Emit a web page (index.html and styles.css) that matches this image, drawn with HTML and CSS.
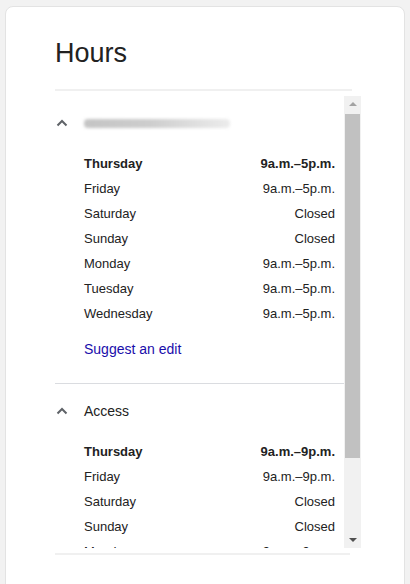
FILE: index.html
```html
<!DOCTYPE html>
<html lang="en">

<head>
    <meta charset="UTF-8">
    <meta name="viewport" content="width=device-width, initial-scale=1.0">
    <title>Hours</title>
    <link rel="stylesheet" href="styles.css">
</head>

<body>
    <div class="card">
        <h1 class="title">Hours</h1>
        <div class="edge edge-top"></div>
        <div class="panel">
            <div class="list">
                <div class="section">
                    <div class="section-head">
                        <span class="chevron">
                            <svg width="12" height="8" viewBox="0 0 12 8"><polyline points="1.5,6.5 6,2 10.5,6.5" fill="none" stroke="#5f6368" stroke-width="2"/></svg>
                        </span>
                        <span class="blurred"></span>
                    </div>
                    <ul class="days">
                        <li class="today"><span>Thursday</span><span>9a.m.–5p.m.</span></li>
                        <li><span>Friday</span><span>9a.m.–5p.m.</span></li>
                        <li><span>Saturday</span><span>Closed</span></li>
                        <li><span>Sunday</span><span>Closed</span></li>
                        <li><span>Monday</span><span>9a.m.–5p.m.</span></li>
                        <li><span>Tuesday</span><span>9a.m.–5p.m.</span></li>
                        <li><span>Wednesday</span><span>9a.m.–5p.m.</span></li>
                    </ul>
                    <a class="suggest" href="#">Suggest an edit</a>
                </div>
                <div class="section">
                    <div class="section-head">
                        <span class="chevron">
                            <svg width="12" height="8" viewBox="0 0 12 8"><polyline points="1.5,6.5 6,2 10.5,6.5" fill="none" stroke="#5f6368" stroke-width="2"/></svg>
                        </span>
                        <span class="section-name">Access</span>
                    </div>
                    <ul class="days">
                        <li class="today"><span>Thursday</span><span>9a.m.–9p.m.</span></li>
                        <li><span>Friday</span><span>9a.m.–9p.m.</span></li>
                        <li><span>Saturday</span><span>Closed</span></li>
                        <li><span>Sunday</span><span>Closed</span></li>
                        <li><span>Monday</span><span>9a.m.–9p.m.</span></li>
                        <li><span>Tuesday</span><span>9a.m.–9p.m.</span></li>
                    </ul>
                </div>
            </div>
            <div class="scrollbar">
                <div class="sb-btn sb-up"></div>
                <div class="sb-thumb"></div>
                <div class="sb-track"></div>
                <div class="sb-btn sb-down"></div>
            </div>
        </div>
        <div class="edge edge-bottom"></div>
    </div>
</body>

</html>
```

FILE: styles.css
```css
html,
body {
    margin: 0;
    padding: 0;
    background: #f2f2f2;
    font-family: "Liberation Sans", Arial, sans-serif;
    color: #222;
    overflow: hidden;
}

.card {
    margin: 6px 5px 0 5px;
    width: 400px;
    min-height: 620px;
    padding: 0 0 0 49px;
    box-sizing: border-box;
    background: #fff;
    border: 1px solid #e3e3e3;
    border-radius: 8px;
}

.title {
    margin: 0;
    padding-top: 30px;
    font-size: 27px;
    line-height: 32px;
    font-weight: normal;
    color: #222;
}

.edge {
    width: 297px;
    height: 2px;
    background: #f0f0f0;
}

.edge-top {
    margin-top: 20px;
}

.edge-bottom {
    margin-top: 5px;
    width: 295px;
}

.panel {
    display: flex;
    width: 306px;
    height: 452px;
    margin-top: 5px;
    overflow: hidden;
}

.list {
    flex: 1;
    overflow: hidden;
}

.section {
    padding: 12px 0 24px 0;
}

.section+.section {
    border-top: 1px solid #dadce0;
    padding-top: 12px;
}

.section-head {
    display: flex;
    align-items: center;
    height: 30px;
}

.chevron {
    display: flex;
    align-items: center;
    width: 28px;
    padding-left: 1px;
}

.blurred {
    display: block;
    width: 146px;
    height: 9px;
    margin-top: 1px;
    border-radius: 4px;
    background: linear-gradient(90deg, #c4c4c4 0%, #cdcdcd 45%, #dedede 75%, #ececec 100%);
    filter: blur(1.5px);
}

.section-name {
    font-size: 14px;
    color: #222;
}

.days {
    list-style: none;
    margin: 12.5px 0 0 0;
    padding: 0 9px 0 29px;
}

.days>li {
    display: flex;
    justify-content: space-between;
    height: 25px;
    line-height: 25px;
    font-size: 13px;
    color: #222;
}

.days>li.today {
    font-weight: bold;
}

.suggest {
    display: block;
    margin: 13.5px 0 0 29px;
    height: 20px;
    line-height: 20px;
    font-size: 14px;
    color: #1a0dab;
    text-decoration: none;
}

.scrollbar {
    display: flex;
    flex-direction: column;
    width: 17px;
    background: #f1f1f1;
}

.sb-btn {
    position: relative;
    height: 17px;
}

.sb-btn::before {
    content: '';
    position: absolute;
    left: 5px;
    width: 0;
    height: 0;
    border-left: 4px solid transparent;
    border-right: 4px solid transparent;
}

.sb-up::before {
    top: 6px;
    border-bottom: 4px solid #a3a3a3;
}

.sb-down::before {
    top: 7px;
    border-top: 4px solid #505050;
}

.sb-thumb {
    height: 344px;
    margin: 1px 1px 0 1px;
    background: #c1c1c1;
}

.sb-track {
    flex: 1;
}
```
